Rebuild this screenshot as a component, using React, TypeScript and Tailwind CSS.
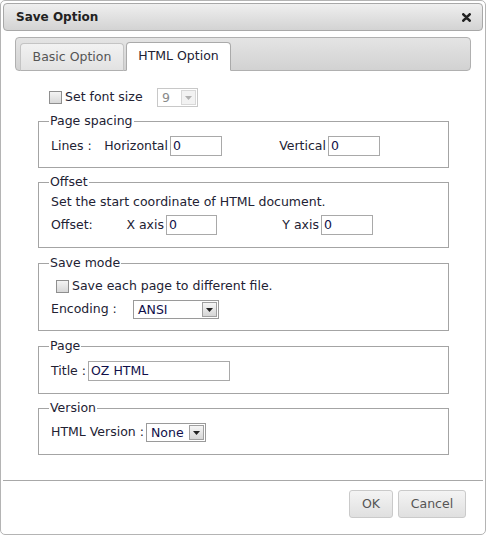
import React from 'react';

function Checkbox() {
  return (
    <span className="inline-block w-[13px] h-[13px] border border-[#8f8f8f] bg-gradient-to-b from-[#f4f4f4] to-[#d8d8d8] shrink-0" />
  );
}

function TextBox({ value, className }: { value: string; className: string }) {
  return (
    <div className={`h-[20px] border border-[#a9a9a9] bg-white pl-[2px] leading-[18px] text-[#10104a] ${className}`}>
      {value}
    </div>
  );
}

function Select({ value, className, disabled }: { value: string; className: string; disabled?: boolean }) {
  return (
    <div
      className={`h-[19px] flex items-center border bg-white ${disabled ? 'border-[#c8c8c8] text-[#8a8a8a]' : 'border-[#9a9a9a] text-[#10104a]'} ${className}`}
    >
      <span className="flex-1 pl-[4px] leading-[17px]">{value}</span>
      <span
        className={`w-[15px] h-[15px] mr-[1px] flex items-center justify-center border ${disabled ? 'border-[#d8d8d8] bg-[#f2f2f2]' : 'border-[#a0a0a0] bg-gradient-to-b from-[#f6f6f6] to-[#d6d6d6]'}`}
      >
        <svg width="7" height="4" viewBox="0 0 7 4">
          <path d="M0 0h7L3.5 4z" fill={disabled ? '#b0b0b0' : '#222'} />
        </svg>
      </span>
    </div>
  );
}

function Group({ title, className, children }: { title: string; className: string; children: React.ReactNode }) {
  return (
    <fieldset className={`w-[411px] border border-[#a4a4a4] px-[10px] ${className}`}>
      <legend className="px-[1px] leading-[16px]">{title}</legend>
      {children}
    </fieldset>
  );
}

export default function App() {
  return (
    <div className="w-[486px] h-[535px] border border-[#b4b4b4] rounded-[5px] bg-white p-[2px] flex flex-col font-['DejaVu_Sans',sans-serif] text-[12.5px] text-[#222233]">
      {/* Title bar */}
      <div className="h-[28px] shrink-0 flex items-center justify-between border border-[#a8a8a8] rounded-[4px] bg-gradient-to-b from-[#efefef] to-[#d3d3d3] pl-[12px] pr-[11px]">
        <span className="font-bold text-[12px] text-[#222]">Save Option</span>
        <svg width="9" height="9" viewBox="0 0 9 9">
          <path d="M1.3 1.3l6.4 6.4M7.7 1.3l-6.4 6.4" stroke="#222" strokeWidth="2.6" strokeLinecap="round" />
        </svg>
      </div>

      {/* Tabs */}
      <div className="mt-[6px] mx-[12px] h-[34px] shrink-0 flex items-end gap-[2px] border border-[#b0b0b0] rounded-[4px] bg-gradient-to-b from-[#e4e4e4] to-[#d2d2d2] pl-[4px]">
        <div className="w-[104px] h-[28px] mb-[-1px] flex items-center justify-center border border-[#c4c4c4] border-b-[#b0b0b0] rounded-t-[4px] bg-gradient-to-b from-[#f2f2f2] to-[#e2e2e2] text-[#555]">
          Basic Option
        </div>
        <div className="relative z-10 w-[105px] h-[29px] mb-[-1px] flex items-center justify-center border border-[#aaa] border-b-white rounded-t-[4px] bg-white text-[#222233]">
          HTML Option
        </div>
      </div>

      {/* Content */}
      <div className="flex flex-col pl-[35px]">
        <div className="mt-[17px] h-[19px] flex items-center pl-[11px]">
          <Checkbox />
          <span className="ml-[3px] w-[92px]">Set font size</span>
          <Select value="9" disabled className="w-[41px]" />
        </div>

        <Group title="Page spacing" className="mt-[6px] pb-[11px]">
          <div className="mt-[7px] h-[20px] flex items-center pl-[2px]">
            <div className="w-[119px] flex justify-between pr-[2px]">
              <span>Lines :</span>
              <span>Horizontal</span>
            </div>
            <TextBox value="0" className="w-[52px]" />
            <div className="w-[106px] text-right pr-[2px]">Vertical</div>
            <TextBox value="0" className="w-[52px]" />
          </div>
        </Group>

        <Group title="Offset" className="mt-[6px] pb-[12px]">
          <div className="mt-[4px] leading-[16px] pl-[2px]">Set the start coordinate of HTML document.</div>
          <div className="mt-[5px] h-[20px] flex items-center pl-[2px]">
            <div className="w-[115px] flex justify-between pr-[2px]">
              <span>Offset:</span>
              <span>X axis</span>
            </div>
            <TextBox value="0" className="w-[51px]" />
            <div className="w-[104px] text-right pr-[2px]">Y axis</div>
            <TextBox value="0" className="w-[52px]" />
          </div>
        </Group>

        <Group title="Save mode" className="mt-[7px] pb-[11px]">
          <div className="mt-[7px] h-[16px] flex items-center pl-[7px]">
            <Checkbox />
            <span className="ml-[3px]">Save each page to different file.</span>
          </div>
          <div className="mt-[6px] h-[19px] flex items-center pl-[2px]">
            <span className="w-[82px]">Encoding :</span>
            <Select value="ANSI" className="w-[86px]" />
          </div>
        </Group>

        <Group title="Page" className="mt-[7px] pb-[12px]">
          <div className="mt-[7px] h-[20px] flex items-center pl-[2px]">
            <span className="w-[37px]">Title :</span>
            <TextBox value="OZ HTML" className="w-[142px]" />
          </div>
        </Group>

        <Group title="Version" className="mt-[6px] pb-[12px]">
          <div className="mt-[7px] h-[19px] flex items-center pl-[2px]">
            <span className="w-[95px]">HTML Version :</span>
            <Select value="None" className="w-[60px]" />
          </div>
        </Group>
      </div>

      <div className="flex-1" />

      {/* Footer */}
      <div className="h-[52px] shrink-0 border-t border-[#a8a8a8] flex justify-end items-start gap-[5px] pt-[9px] pr-[17px]">
        <button className="w-[44px] h-[28px] border border-[#cacaca] rounded-[3px] bg-gradient-to-b from-[#f4f4f4] to-[#e0e0e0] text-[#555]">
          OK
        </button>
        <button className="w-[68px] h-[28px] border border-[#cacaca] rounded-[3px] bg-gradient-to-b from-[#f4f4f4] to-[#e0e0e0] text-[#555]">
          Cancel
        </button>
      </div>
    </div>
  );
}
